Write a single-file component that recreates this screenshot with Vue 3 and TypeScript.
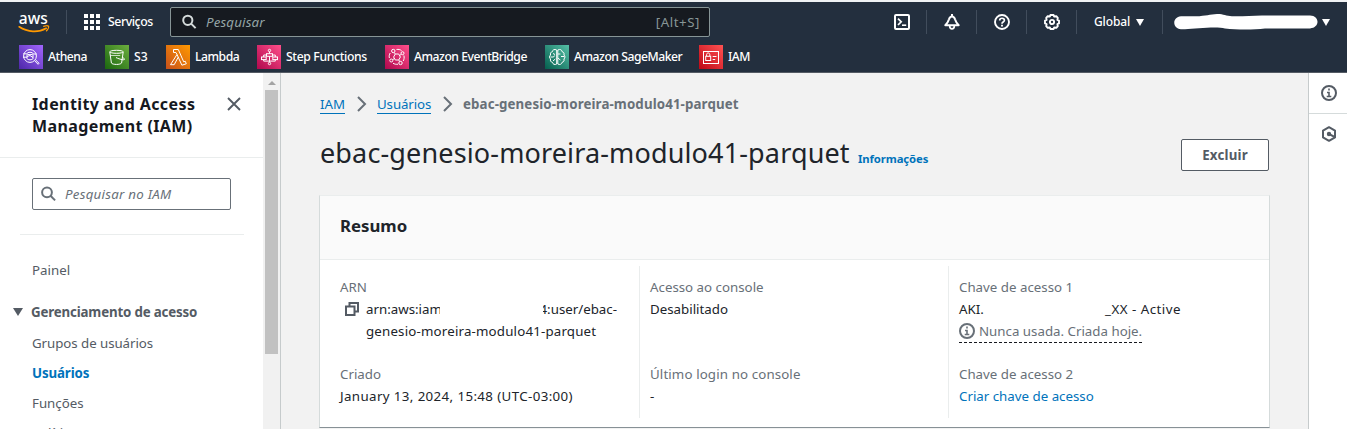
<script setup lang="ts">
interface Favorite {
  name: string
  icon: string
}

const favorites: Favorite[] = [
  { name: 'Athena', icon: 'athena' },
  { name: 'S3', icon: 's3' },
  { name: 'Lambda', icon: 'lambda' },
  { name: 'Step Functions', icon: 'step' },
  { name: 'Amazon EventBridge', icon: 'bridge' },
  { name: 'Amazon SageMaker', icon: 'sage' },
  { name: 'IAM', icon: 'iam' },
]

const accessLinks = [
  { label: 'Grupos de usuários', cls: 'groups' },
  { label: 'Usuários', cls: 'active' },
  { label: 'Funções', cls: 'roles' },
  { label: 'Políticas', cls: 'policies' },
]
</script>

<template>
  <div class="page">
    <header class="top">
      <div class="bar">
        <div class="brand">
          <svg width="32" height="22" viewBox="0 0 32 22">
            <text x="0.8" y="11.5" class="logo-text" textLength="29">aws</text>
            <path d="M1.200 14.800c8.400 5.600 19.300 6 27 1.500" fill="none" stroke="#f90" stroke-width="1.700" stroke-linecap="round" />
            <path d="M25.700 14.300c2-.7 4.400-.7 4.800 0s-.5 3-2 4.400" fill="none" stroke="#f90" stroke-width="1.400" stroke-linecap="round" />
          </svg>
        </div>
        <div class="services">
          <svg width="16" height="16" viewBox="0 0 16 16" fill="#fff">
            <path d="M0 0h4v4H0zM6 0h4v4H6zM12 0h4v4h-4zM0 6h4v4H0zM6 6h4v4H6zM12 6h4v4h-4zM0 12h4v4H0zM6 12h4v4H6zM12 12h4v4h-4z" />
          </svg>
          <span class="t-services">Serviços</span>
        </div>
        <div class="search">
          <svg width="16" height="16" viewBox="0 0 16 16" fill="none" stroke="#d5dbdb" stroke-width="2">
            <circle cx="5.800" cy="6.300" r="4.600" /><path d="M9.100 9.600l4.500 4.500" />
          </svg>
          <span class="t-search">Pesquisar</span>
          <span class="t-alt">[Alt+S]</span>
        </div>
        <div class="tools">
          <div class="tool">
            <svg width="16" height="16" viewBox="0 0 16 16" fill="none" stroke="#fff" stroke-width="2">
              <rect x="1" y="1" width="14" height="14" rx="1" /><path d="M4 4.700l3.200 3.100L4 11" stroke-width="1.700" /><path d="M8 11.200h4.200" stroke-width="1.600" />
            </svg>
          </div>
          <div class="tool">
            <svg width="16" height="16" viewBox="0 0 16 16" fill="none" stroke="#fff" stroke-width="2" stroke-linejoin="round">
              <path d="M8 0v2.500M1.300 11.200C3.500 9.200 4.300 7.600 5 5.300 5.500 3.500 6.400 2.400 8 2.400s2.500 1.100 3 2.900c.7 2.300 1.500 3.900 3.700 5.900z" /><path d="M5.700 12c.1 3.900 4.500 3.900 4.600 0" stroke-width="1.700" />
            </svg>
          </div>
          <div class="tool">
            <svg width="16" height="16" viewBox="0 0 16 16" fill="none" stroke="#fff" stroke-width="1.900">
              <circle cx="8" cy="8" r="7" /><path d="M5.700 6.500c0-3 4.700-2.900 4.700-.2 0 1.800-2.400 1.700-2.400 3.400" stroke-width="1.700" /><path d="M8 10.700v1.700" />
            </svg>
          </div>
          <div class="tool">
            <svg width="16" height="16" viewBox="0 0 16 16" fill="none" stroke="#fff" stroke-width="1.900" stroke-linejoin="round">
              <path d="M6.400 1h3.200l.5 1.500 2.200-.3 1.500 1.600-.4 2.100 1.600.7v2.800l-1.600.7.400 2.100-1.500 1.600-2.200-.3-.5 1.500H6.400l-.5-1.500-2.200.3-1.500-1.600.4-2.100L1 9.400V6.600l1.600-.7-.4-2.100 1.500-1.600 2.200.3z" /><circle cx="8" cy="8" r="2.100" />
            </svg>
          </div>
          <div class="region">
            <span class="t-global">Global</span><i class="caret"></i>
          </div>
          <div class="account">
            <svg width="144" height="16" viewBox="0 0 144 16">
              <path d="M7 2.300H22C32 2 36 .3 43 0c6-.1 9 1.900 15 2.200 10 .5 21-1 32-.8h46c10 .3 10 12.400 0 13H91c-12 1.500-28 1.400-40 0-8-2-29 0-40 .8H7c-9-1-9-12 0-12.900z" fill="#fff" />
            </svg>
            <i class="caret"></i>
          </div>
        </div>
      </div>
      <nav class="favorites">
        <div v-for="f in favorites" :key="f.icon" class="fav" :class="f.icon">
          <span class="tile">
            <svg width="24" height="24" viewBox="0 0 24 24" fill="none" stroke="#fff" stroke-width="1">
              <g v-if="f.icon === 'athena'">
                <circle cx="11" cy="11" r="6.400" /><path d="M15.500 15.600l3.600 3.700 1-1-3.700-3.600M4.300 8.800h3M4 12.200h4M14.700 9h3" /><ellipse cx="11" cy="8.500" rx="3" ry="1.200" /><path d="M8 8.500v5c0 1.700 6 1.700 6 0v-5M8 11.500l3-1 3 2" />
              </g>
              <g v-else-if="f.icon === 's3'">
                <ellipse cx="11.500" cy="6.800" rx="6.700" ry="1.500" /><path d="M4.800 7l1.600 11c1 1.900 9.200 1.900 10.200 0L18.200 7M11 12.500c3 1.600 9 3.300 8.500 1.500-.2-.7-1.500-1.200-2.200-1.500" /><path d="M5.200 10.500h10" opacity=".7" />
              </g>
              <g v-else-if="f.icon === 'lambda'">
                <path d="M7.500 4.500h4.800l5.400 12.300 1.600-.5 1 2.500-4.400 1.400L11 9.500M7.500 4.500v3h2.400L11 9.500 4.500 19.700h3.700l4-7.500" />
              </g>
              <g v-else-if="f.icon === 'step'">
                <circle cx="12.500" cy="5.500" r="1.200" /><circle cx="12.500" cy="18.500" r="1.200" /><rect x="9.500" y="8.700" width="6" height="2.600" /><path d="M12.500 6.700v2M12.500 11.300v6M9.500 10H6.700v2M15.500 10h2.800v2M6.700 14.600v1.500h11.600v-1.500" /><rect x="4.500" y="12" width="4.700" height="2.600" /><rect x="15.800" y="12" width="4.700" height="2.600" />
              </g>
              <g v-else-if="f.icon === 'bridge'">
                <path d="M10.300 9h3.400l1.700 3-1.700 3h-3.400l-1.700-3z" /><circle cx="8.300" cy="6" r="1.700" /><circle cx="15.500" cy="18" r="1.700" /><circle cx="17.500" cy="8.200" r="1.500" /><circle cx="6.300" cy="15.500" r="1.500" /><path d="M9.200 7.500l1.100 1.500M14.800 16.500L13.700 15M11.500 4.500c2-.3 3.500 0 5 1M18.900 10.500c.5 2 .2 4-.7 5.500M5.200 8c-1 1.500-1.200 3.300-.8 5M8 18.200c1.500 1 3.300 1.300 5 1M7.700 14.700l1.800-1.300M16.300 9.300l-1.800 1.300" />
              </g>
              <g v-else-if="f.icon === 'sage'">
                <path d="M11.700 5C9.500 3.700 7.300 5 7.400 6.700 5.600 7 5 8.500 5.600 10c-1.400 1-1.400 3 0 4-.6 1.500 0 3 1.800 3.300.3 2 2.500 2.800 4.300 1.700zM12.800 5c2.200-1.300 4.400 0 4.300 1.700 1.800.3 2.400 1.800 1.800 3.300 1.400 1 1.400 3 0 4 .6 1.500 0 3-1.800 3.300-.3 2-2.500 2.800-4.300 1.700z" /><path d="M5.600 12h3l1-1.500M8 8.500l2 1M8 16l2.300-2M12.800 9h2.600M12.800 13l2.600 2M16 11.500h3" />
              </g>
              <g v-else>
                <rect x="4.500" y="6.500" width="15" height="12" /><rect x="6.700" y="11.300" width="5" height="4.200" /><path d="M7.600 11V9.500c0-2 3.200-2 3.200 0V11M13.700 11.500h3.800M13.700 14.500h2.500" />
              </g>
            </svg>
          </span>
          <span class="fav-name">{{ f.name }}</span>
        </div>
      </nav>
    </header>

    <div class="body">
      <aside class="side">
        <div class="side-head">
          <h2>Identity and Access<br>Management (IAM)</h2>
          <svg width="14" height="14" viewBox="0 0 14 14" stroke="#545b64" stroke-width="1.900"><path d="M1 1l12 12M13 1L1 13" /></svg>
        </div>
        <div class="filter">
          <svg width="16" height="16" viewBox="0 0 16 16" fill="none" stroke="#687078" stroke-width="2">
            <circle cx="6" cy="6.300" r="4.900" /><path d="M9.500 9.800l4.600 4.600" />
          </svg>
          <span class="t-filter">Pesquisar no IAM</span>
        </div>
        <hr class="rule">
        <a class="link painel">Painel</a>
        <div class="group"><i class="tri"></i><b>Gerenciamento de acesso</b></div>
        <a v-for="l in accessLinks" :key="l.cls" class="link" :class="l.cls">{{ l.label }}</a>
      </aside>
      <div class="scroll"><i class="up"></i><i class="thumb"></i></div>

      <main class="main">
        <div class="crumbs">
          <a class="c-iam">IAM</a>
          <svg width="10" height="16" viewBox="0 0 10 16" fill="none" stroke="#687078" stroke-width="2"><path d="M1 1l7 7-7 7" /></svg>
          <a class="c-users">Usuários</a>
          <svg width="10" height="16" viewBox="0 0 10 16" fill="none" stroke="#687078" stroke-width="2"><path d="M1 1l7 7-7 7" /></svg>
          <b>ebac-genesio-moreira-modulo41-parquet</b>
        </div>
        <div class="title">
          <h1>ebac-genesio-moreira-modulo41-parquet</h1>
          <a class="info">Informações</a>
          <button class="delete"><span>Excluir</span></button>
        </div>
        <section class="card">
          <div class="card-head"><h3>Resumo</h3></div>
          <div class="cols">
            <div class="col">
              <div class="cell">
                <div class="k arn-k">ARN</div>
                <div class="arn">
                  <svg width="15" height="15" viewBox="0 0 15 15" fill="none" stroke="#545b64" stroke-width="2"><path d="M1 4.500h8.500V13H1z" /><path d="M4.500 4.500V1H13v8.500H9.500" /></svg>
                  <div class="v">
                    <div class="masked"><span class="cut-end">arn:aws:iam:</span><span class="cut-start">4:user/ebac-</span></div>
                    <div class="arn2">genesio-moreira-modulo41-parquet</div>
                  </div>
                </div>
              </div>
              <div class="cell"><div class="k criado">Criado</div><div class="v date">January 13, 2024, 15:48 (UTC-03:00)</div></div>
            </div>
            <div class="col">
              <div class="cell"><div class="k ac">Acesso ao console</div><div class="v des">Desabilitado</div></div>
              <div class="cell"><div class="k ul">Último login no console</div><div class="v">-</div></div>
            </div>
            <div class="col">
              <div class="cell">
                <div class="k ch">Chave de acesso 1</div>
                <div class="v key"><span class="aki">AKI.</span><span class="xx">_XX - Active</span></div>
                <div class="unused">
                  <svg width="16" height="16" viewBox="0 0 16 16" fill="none" stroke="#687078" stroke-width="2"><circle cx="8" cy="8" r="7" /><path d="M8 3.500v2M6 7.500h2v4M5.700 11.500h4.600" stroke-width="1.600" /></svg>
                  <span>Nunca usada. Criada hoje.</span>
                </div>
              </div>
              <div class="cell"><div class="k ch">Chave de acesso 2</div><a class="create">Criar chave de acesso</a></div>
            </div>
          </div>
        </section>
      </main>

      <aside class="rail">
        <div class="rail-item">
          <svg width="16" height="16" viewBox="0 0 16 16" fill="none" stroke="#545b64" stroke-width="2"><circle cx="8" cy="8" r="7" /><path d="M8 3.500v2M6 7.500h2v4M5.700 11.500h4.600" stroke-width="1.600" /></svg>
        </div>
        <div class="rail-item">
          <svg width="16" height="16" viewBox="0 0 16 16" fill="none" stroke="#545b64" stroke-width="2"><path d="M8 1.200l6 3.400v6.800l-6 3.400-6-3.400V4.600z" stroke-linejoin="round" /><circle cx="8" cy="8" r="1.200" fill="#545b64" /><path d="M8 8l5 2.600" /></svg>
        </div>
      </aside>
    </div>
  </div>
</template>

<style>
body { margin: 0; overflow: hidden; }
</style>

<style scoped>
.page { height: 429px; overflow: hidden; font-family: "Noto Sans", "Open Sans", sans-serif; font-size: 13.3px; line-height: 22px; color: #20242a; display: flex; flex-direction: column; background: #f2f2f2; white-space: nowrap; }
.page * { box-sizing: border-box; }
svg { display: block; flex: none; }
h1, h2, h3 { margin: 0; }

.top { height: 73px; flex: none; background: #232f3e; border-top: 2px solid #f0f2f4; border-bottom: 1px solid #545b64; color: #fff; }
.bar { height: 40px; display: flex; align-items: center; }
.brand { width: 67px; height: 24px; padding: 2px 0 0 18px; border-right: 1px solid #414d5c; }
.brand svg { overflow: visible; }
.logo-text { font-size: 15.500px; font-weight: 500; fill: #fff; }
.services { width: 103px; padding-left: 17px; display: flex; align-items: center; gap: 8px; }
.t-services { font-weight: 500; font-size: 12.300px; letter-spacing: -0.450px; }
.search { width: 540px; height: 30px; background: #161a20; border: 1px solid #879596; border-radius: 2px; display: flex; align-items: center; padding: 0 9px 0 11px; color: #95a5a6; }
.t-search { font-style: italic; margin-left: 8px; flex: 1; letter-spacing: 0.150px; }
.t-alt { color: #879596; letter-spacing: 0.550px; }
.tools { margin-left: 167px; display: flex; align-items: center; height: 24px; }
.tool { width: 50px; height: 24px; display: flex; align-items: center; justify-content: center; border-right: 1px solid #414d5c; }
.region { width: 86px; height: 24px; border-right: 1px solid #414d5c; display: flex; align-items: center; padding-left: 17px; }
.t-global { width: 42px; font-size: 12px; font-weight: 500; letter-spacing: -0.100px; }
.caret { border: 4px solid transparent; border-top: 7px solid #fff; border-bottom: 0; }
.account { display: flex; align-items: center; padding-left: 11px; gap: 4px; }

.favorites { display: flex; padding-left: 19px; height: 30px; align-items: center; }
.fav { display: flex; align-items: center; gap: 5px; font-size: 12.200px; font-weight: 500; letter-spacing: -0.480px; }
.fav.athena { width: 86px; } .fav.s3 { width: 61px; letter-spacing: 0; } .fav.lambda { width: 91px; }
.fav.step { width: 128px; letter-spacing: -0.350px; } .fav.bridge { width: 160px; } .fav.sage { width: 154px; }
.tile { width: 24px; height: 24px; }
.athena .tile { background: linear-gradient(45deg, #4d27a8, #a166ff); }
.s3 .tile { background: linear-gradient(45deg, #1b660f, #6cae3e); }
.lambda .tile { background: linear-gradient(45deg, #c8511b, #f90); }
.step .tile, .bridge .tile { background: linear-gradient(45deg, #b0084d, #ff4f8b); }
.sage .tile { background: linear-gradient(45deg, #055f4e, #56c0a7); }
.iam .tile { background: linear-gradient(45deg, #bd0816, #ff5252); }

.body { flex: 1; min-height: 0; display: flex; }
.side { width: 263px; background: #fff; overflow: hidden; color: #545b64; }
.side-head { height: 85px; border-bottom: 1px solid #eaeded; padding: 20px 22px 0 32px; display: flex; justify-content: space-between; color: #16191f; }
.side-head h2 { font-size: 16px; font-weight: 700; line-height: 22px; letter-spacing: 0.400px; }
.side-head svg { margin-top: 4px; }
.filter { margin: 20px 32px 0; height: 32px; border: 1px solid #687078; border-radius: 2px; display: flex; align-items: center; padding-left: 8px; gap: 8px; color: #687078; }
.t-filter { font-style: italic; letter-spacing: 0.250px; }
.rule { border: 0; height: 1px; background: #eaeded; margin: 24px 19px 0 20px; }
.link { display: block; margin-left: 32px; line-height: 30px; }
.painel { margin-top: 20px; }
.group { height: 30px; margin: 12px 0 1px; display: flex; align-items: center; padding-left: 13px; gap: 8px; letter-spacing: -0.160px; }
.tri { border: 5px solid transparent; border-top: 8px solid #545b64; border-bottom: 0; }
.groups { letter-spacing: -0.060px; }
.link.active { color: #0073bb; font-weight: 700; letter-spacing: -0.120px; }
.scroll { width: 18px; background: #f1f1f1; border-right: 1px solid #c6cbcc; display: flex; flex-direction: column; align-items: center; }
.up { border: 4px solid transparent; border-bottom: 4px solid #a3a3a3; border-top: 0; margin-top: 8px; }
.thumb { width: 13px; height: 264px; background: #c1c1c1; margin-top: 5px; }

.main { flex: 1; padding: 20px 39px 0 38px; }
.crumbs { height: 22px; display: flex; align-items: center; padding-left: 1px; color: #687078; }
.crumbs a { color: #0073bb; line-height: 18px; border-bottom: 1px solid #0073bb; }
.c-iam { width: 25px; margin-right: 12px; } .c-users { width: 54px; margin: 0 12px 0 10px; letter-spacing: -0.100px; }
.crumbs b { margin-left: 10px; letter-spacing: 0.120px; }
.title { height: 40px; margin-top: 20px; display: flex; padding-left: 1px; align-items: baseline; line-height: 36px; }
h1 { font-size: 27px; font-weight: 400; width: 538px; letter-spacing: 0.140px; }
.info { font-size: 11.300px; font-weight: 700; color: #0073bb; flex: 1; letter-spacing: -0.100px; }
.delete { align-self: flex-start; margin-top: 4px; width: 88px; height: 32px; padding: 0; background: #fff; border: 1px solid #545b64; border-radius: 2px; font: 700 13.300px/20px "Noto Sans", sans-serif; color: #545b64; letter-spacing: 0.200px; }
.card { margin: 20px -1px 0 0; height: 233px; background: #fff; border: 1px solid #d5dbdb; border-top-color: #eaeded; border-bottom: 1px solid #879196; }
.card-head { height: 64px; background: #fafafa; border-bottom: 1px solid #eaeded; padding: 20px 20px 0; }
h3 { font-size: 16.800px; line-height: 20px; }
.cols { display: grid; grid-template-columns: 320px 309px 1fr; grid-template-rows: 152px; padding-top: 6px; }
.col { border-right: 1px solid #eaeded; padding: 10px 0 0 10px; }
.col:first-child { padding-left: 20px; } .col:last-child { border: 0; }
.cell { height: 87px; }
.cell:last-child { height: 54px; }
.k { color: #687078; }
.arn { display: flex; padding-left: 5px; gap: 6px; }
.arn svg { margin-top: 4px; }
.masked { display: flex; gap: 103px; }
.cut-end { width: 74px; overflow: hidden; }
.cut-start { width: 74px; overflow: hidden; display: flex; justify-content: flex-end; }
.arn2 { letter-spacing: 0.180px; }
.date { letter-spacing: 0.390px; }
.ul { letter-spacing: 0.120px; }
.key { display: flex; } .aki { width: 146px; }
.xx { letter-spacing: 0.500px; }
.unused { display: inline-flex; height: 23px; width: 183px; gap: 4px; align-items: center; color: #687078; border-bottom: 1px dashed #16191f; }
.create { color: #0073bb; }

.rail { width: 39px; background: #fff; border-left: 1px solid #c6cbcc; }
.rail-item { height: 41px; display: flex; align-items: center; padding-left: 12px; }
.rail-item:first-child { border-bottom: 1px solid #d5dbdb; }
.rail-item:last-child { height: 40px; }
</style>
